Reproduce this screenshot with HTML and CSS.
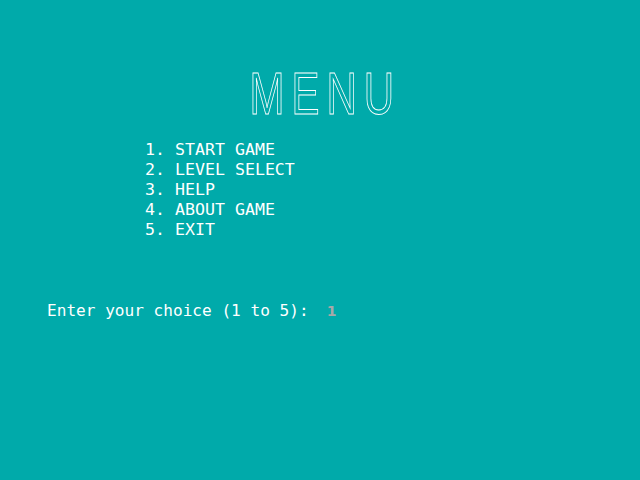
FILE: index.html
```html
<!DOCTYPE html>
<html>
<head>
<meta charset="utf-8">
<link rel="stylesheet" href="styles.css">
</head>
<body>
<div class="screen">
  <h1 class="title"><span class="title-text">MENU</span></h1>
  <ol class="menu">
    <li class="item">1. START GAME</li>
    <li class="item">2. LEVEL SELECT</li>
    <li class="item">3. HELP</li>
    <li class="item">4. ABOUT GAME</li>
    <li class="item">5. EXIT</li>
  </ol>
  <div class="prompt"><span class="prompt-label">Enter your choice (1 to 5):</span><span class="answer">1</span></div>
</div>
</body>
</html>
```
FILE: styles.css
```css
html, body {
  margin: 0;
  padding: 0;
  background: #00aaaa;
}
.screen {
  width: 640px;
  height: 480px;
  overflow: hidden;
  background: #00aaaa;
  color: #ffffff;
  font-family: "DejaVu Sans Mono", monospace;
  font-size: 16.6px;
  display: flex;
  flex-direction: column;
}
.title {
  margin: 64px 0 0 0;
  height: 60px;
  font-family: "Liberation Sans", Arial, sans-serif;
  font-weight: normal;
  font-size: 60px;
  line-height: 60px;
  text-align: center;
}
.title-text {
  display: inline-block;
  transform: scaleX(0.7);
  margin-left: 10px;
  letter-spacing: 10px;
  color: transparent;
  -webkit-text-stroke: 1px #ffffff;
}
.menu {
  list-style: none;
  margin: 16px 0 0 0;
  padding: 0 0 0 145px;
  line-height: 20px;
}
.item {
  white-space: pre;
}
.prompt {
  margin: 61px 0 0 0;
  padding-left: 47px;
  line-height: 20px;
  font-size: 16.1px;
  display: flex;
  align-items: baseline;
}
.prompt-label {
  white-space: pre;
}
.answer {
  margin-left: 18px;
  font-family: "DejaVu Sans", sans-serif;
  font-weight: bold;
  font-size: 14px;
  color: #a8a8a8;
}
```
